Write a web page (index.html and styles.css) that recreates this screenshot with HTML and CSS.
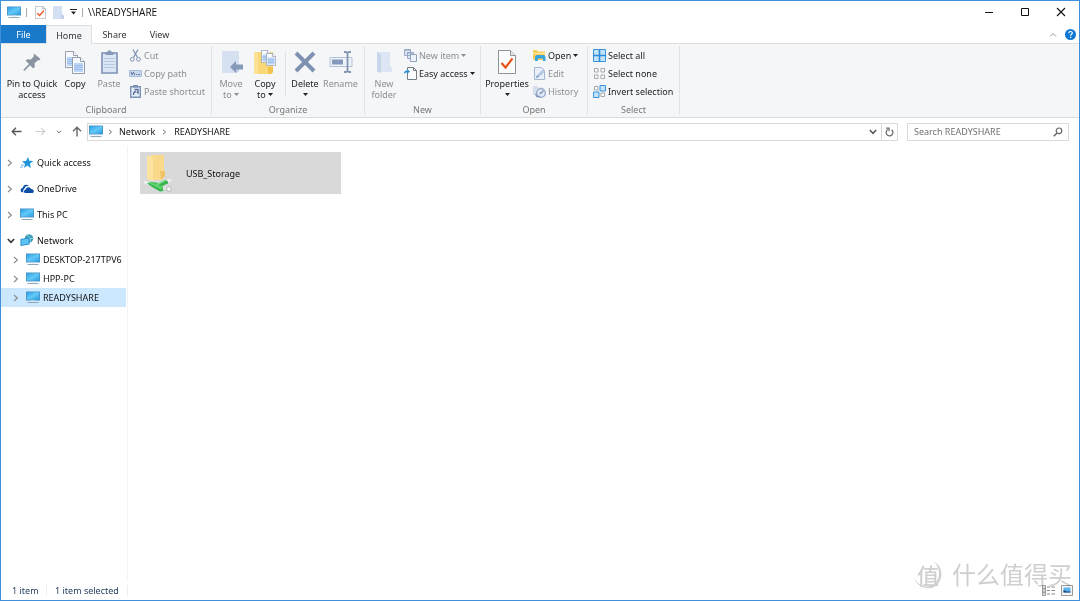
FILE: index.html
```
<!DOCTYPE html>
<html lang="en">
<head>
<meta charset="utf-8">
<title>\\READYSHARE</title>
<link rel="stylesheet" href="styles.css">
</head>
<body>
<svg class="defs" aria-hidden="true">
  <linearGradient id="screen" x1="0" y1="0" x2="1" y2="1"><stop offset="0" stop-color="#2b9fe6"/><stop offset=".5" stop-color="#62c8f8"/><stop offset="1" stop-color="#2a9ee2"/></linearGradient>
  <symbol id="pc" viewBox="0 0 14 13"><path d="M0 .5h14v9H0z" fill="#4a93c0"/><path d="M.8 1.200h12.400v7.500H.8z" fill="url(#screen)"/><path d="M5 9.500h4v1H5z" fill="#d3e2eb"/><path d="M1.500 11h11v1H1.500z" fill="#8fa9ba"/></symbol>
  <symbol id="chev" viewBox="0 0 6 8"><path d="M1 1l3.400 3L1 7" fill="none" stroke="currentColor" stroke-width="1.100"/></symbol>
  <symbol id="chevdown" viewBox="0 0 8 6"><path d="M.8 1L4 4.300 7.200 1" fill="none" stroke="currentColor" stroke-width="1.500"/></symbol>
  <symbol id="caret" viewBox="0 0 5 3"><path d="M0 0h5L2.500 3z" fill="currentColor"/></symbol>
  <symbol id="check" viewBox="0 0 18 24"><path d="M.5.5h12l5 5v18H.5z" fill="#fcfcfd" stroke="#8f9499"/><path d="M12.500.5v5h5" fill="#e8eaec" stroke="#8f9499"/><path d="M3.500 13l4 4.500 7-9" fill="none" stroke="#e8531b" stroke-width="2.200"/></symbol>
  <symbol id="page" viewBox="0 0 13 17"><path d="M.5.5h8l4 4v12H.5z" fill="#f6f9fd" stroke="#949da8"/><path d="M8.500.5v4h4" fill="#fff" stroke="#949da8"/><path d="M2 6h9v9H2z" fill="#bdd5f5"/><path d="M2 8.500h9M2 10.500h9M2 12.500h9" stroke="#8fb5ea" stroke-width=".7"/></symbol>
</svg>
<div class="window">
  <header class="titlebar">
    <svg class="t-pc" viewBox="0 0 14 13"><use href="#pc"/></svg>
    <span class="divider"></span>
    <button class="plain" aria-label="Properties"><svg width="11" height="13" viewBox="0 0 18 24" preserveAspectRatio="none"><use href="#check" width="18" height="24"/></svg></button>
    <button class="plain newf" aria-label="New folder"><svg width="11" height="13" viewBox="0 0 11 13"><path d="M0 0h9v8l2 2v3H0z" fill="#d3e0f4"/><path d="M9 8l2 2v3H7z" fill="#c1d1ea"/></svg></button>
    <button class="plain" aria-label="Customize toolbar"><svg width="7" height="6" viewBox="0 0 7 6"><path d="M0 .5h7" stroke="#222"/><path d="M1 2.500h5L3.500 5.500z" fill="#222"/></svg></button>
    <span class="divider"></span>
    <h1 class="title">\\READYSHARE</h1>
    <div class="winctl">
      <button class="plain" aria-label="Minimize"><svg width="10" height="10" viewBox="0 0 10 10"><path d="M1 5.500h8" stroke="#111"/></svg></button>
      <button class="plain" aria-label="Maximize"><svg width="10" height="10" viewBox="0 0 10 10"><path d="M1.500 1.500h7v7h-7z" fill="none" stroke="#111"/></svg></button>
      <button class="plain" aria-label="Close"><svg width="10" height="10" viewBox="0 0 10 10"><path d="M1 1l8 8M9 1L1 9" stroke="#111" stroke-width="1.100"/></svg></button>
    </div>
  </header>

  <nav class="tabs">
    <button class="tab file">File</button>
    <button class="tab active">Home</button>
    <button class="tab">Share</button>
    <button class="tab">View</button>
    <div class="tabs-end">
      <button class="plain" aria-label="Collapse ribbon"><svg width="8" height="5" viewBox="0 0 8 5"><path d="M1 4.500l3-3 3 3" fill="none" stroke="#999"/></svg></button>
      <button class="help" aria-label="Help"><svg width="11" height="11" viewBox="0 0 11 11"><circle cx="5.500" cy="5.500" r="5.500" fill="#0f78d4"/><path d="M3.800 4.200c0-2.300 3.500-2.200 3.500-.2 0 1.300-1.700 1.300-1.700 2.700" fill="none" stroke="#fff" stroke-width="1.200"/><path d="M5 7.700h1.300V9H5z" fill="#fff"/></svg></button>
    </div>
  </nav>

  <div class="ribbon">
    <section class="group clipboard">
      <div class="tools">
        <button class="big wide"><span class="ico"><svg width="18" height="18" viewBox="0 0 18 18"><path d="M11 .5L17.500 6l-1.500 1.500-1-.3-3.500 3 .3 3.800-1.500 1.500-3.300-3.300L2 17.500l-1.500.3.300-1.500L6 11 2.700 7.700 4.200 6.200l3.800.3 3-3.500-.3-1.200z" fill="#8a949f"/></svg></span><span>Pin to Quick<br>access</span></button>
        <button class="big"><span class="ico"><svg width="20" height="23" viewBox="0 0 20 23"><svg width="13" height="17"><use href="#page"/></svg><svg x="7" y="6" width="13" height="17"><use href="#page"/></svg></svg></span><span>Copy</span></button>
        <button class="big" disabled><span class="ico"><svg width="17" height="24" viewBox="0 0 17 24"><path d="M1 3h15v20H1z" fill="#dbe6f5" stroke="#7d92b4" stroke-width="1.600"/><path d="M4.500 2h2L7 .5h3L10.500 2h2v3h-8z" fill="#8598b6"/><path d="M3 8.500h11M3 11.500h11M3 14.500h11M3 17.500h11" stroke="#b5c8e2"/></svg></span><span>Paste</span></button>
        <div class="small-col">
          <button class="small" disabled><svg viewBox="0 0 13 13"><path d="M4 .5l4.500 8M9 .5l-4.500 8" fill="none" stroke="#8294b2" stroke-width="1.300"/><circle cx="3.300" cy="10.300" r="1.900" fill="none" stroke="#8294b2"/><circle cx="9.500" cy="10.300" r="1.900" fill="none" stroke="#8294b2"/></svg>Cut</button>
          <button class="small" disabled><svg viewBox="0 0 13 13"><path d="M.5 3.500h12v6H.5z" fill="#c9d7ec" stroke="#a9bddb"/><path d="M2 5l1.200 3L4.500 5l1.200 3M7 7.500h1M9 7.500h2" fill="none" stroke="#5c7192" stroke-width=".9"/></svg>Copy path</button>
          <button class="small" disabled><svg viewBox="0 0 13 13"><path d="M1.700 1.700h9.600v10.600H1.700z" fill="#e4ecf8" stroke="#7d92b4" stroke-width="1.400"/><path d="M4 0h5v2.500H4z" fill="#7d92b4"/><path d="M4.500 10C4.500 7 5.500 6.500 7 6.500M5.500 4.500H9V8L7.800 6.800" fill="none" stroke="#576f96" stroke-width="1.300"/></svg>Paste shortcut</button>
        </div>
      </div>
      <h2>Clipboard</h2>
    </section>

    <section class="group organize">
      <div class="tools">
        <button class="big" disabled><span class="ico"><svg width="23" height="24" viewBox="0 0 23 24"><path d="M2 1h17v20l-3 2H2z" fill="#d5e0f1"/><path d="M16 17h3v4l-3 2z" fill="#bfcee6"/><path d="M10 17l6-6v3.500h7v5h-7V23z" fill="#8599b9"/></svg></span><span>Move<br>to <svg class="caret"><use href="#caret"/></svg></span></button>
        <button class="big"><span class="ico"><svg width="22" height="25" viewBox="0 0 22 25"><path d="M0 2h19v20l-2 2H0z" fill="#f9d977"/><path d="M0 2h4v22H0z" fill="#fbe294"/><path d="M14 17h5v5l-2 2h-3z" fill="#f1c24e"/><svg x="7" y="0" width="10" height="13" viewBox="0 0 13 17"><use href="#page" width="13" height="17"/></svg><svg x="12" y="3" width="10" height="13" viewBox="0 0 13 17"><use href="#page" width="13" height="17"/></svg></svg></span><span>Copy<br>to <svg class="caret"><use href="#caret"/></svg></span></button>
        <span class="rule"></span>
        <button class="big"><span class="ico"><svg width="22" height="22" viewBox="0 0 22 22"><path d="M2 2l18 18M20 2L2 20" stroke="#7f91b1" stroke-width="4"/></svg></span><span>Delete<br><svg class="caret"><use href="#caret"/></svg></span></button>
        <button class="big ren" disabled><span class="ico"><svg width="24" height="22" viewBox="0 0 24 22"><path d="M1 6.500h22v9H1z" fill="#eef3fa" stroke="#b3c2da"/><path d="M3 8.500h11v5H3z" fill="#8398ba"/><path d="M15 1h2l1.500 1L20 1h2M18.500 2v18M15 21h2l1.500-1 1.500 1h2" fill="none" stroke="#8294b2" stroke-width="1.800"/></svg></span><span>Rename</span></button>
      </div>
      <h2>Organize</h2>
    </section>

    <section class="group new">
      <div class="tools">
        <button class="big" disabled><span class="ico"><svg width="16" height="24" viewBox="0 0 16 24"><path d="M1 2h13v14l2 1.500V22H1z" fill="#dce6f4"/><path d="M1 2l4 2.500V23l-4-1.500z" fill="#c8d6eb"/></svg></span><span>New<br>folder</span></button>
        <div class="small-col">
          <button class="small" disabled><svg viewBox="0 0 13 13"><path d="M.5.5h6v6h-6zM3.500 3.500h6v6h-6z" fill="#dbe6f5" stroke="#9aabc8"/><path d="M6.500 5.500h6v7h-6z" fill="#eef3fa" stroke="#8fa3c3"/><path d="M.5 1h6M3.500 4h6" stroke="#8fa3c3"/></svg>New item <svg class="caret"><use href="#caret"/></svg></button>
          <button class="small"><svg viewBox="0 0 13 13"><path d="M3.500.5h6l3 3v9h-9z" fill="#fafbfc" stroke="#777e86"/><path d="M9.500.5v3h3" fill="none" stroke="#777e86"/><path d="M0 7c0-3 1-3.500 3-3.500V2l3 2.500-3 2.500V5.500C1.500 5.500 1 6 0 7z" fill="#2c8fd0"/></svg>Easy access <svg class="caret"><use href="#caret"/></svg></button>
        </div>
      </div>
      <h2>New</h2>
    </section>

    <section class="group open">
      <div class="tools">
        <button class="big props"><span class="ico"><svg width="18" height="24"><use href="#check"/></svg></span><span>Properties<br><svg class="caret"><use href="#caret"/></svg></span></button>
        <div class="small-col">
          <button class="small"><svg viewBox="0 0 13 13"><path d="M0 1h4l1 1.500h7V11H0z" fill="#f8cf5d"/><path d="M0 4h12v1H0z" fill="#fde8a4"/><path d="M2 12V8.500C2 7 3 6 4.500 6H10c1.500 0 2.500 1 2.500 2.500V12H10V9.500H4.800V12z" fill="#35a6e0"/></svg>Open <svg class="caret"><use href="#caret"/></svg></button>
          <button class="small" disabled><svg viewBox="0 0 13 13"><path d="M1.500.5h7l3 3v9h-10z" fill="#e9f0f9" stroke="#a2b5d2"/><path d="M3 11l1-3L10 2.500l2 2L6 10z" fill="#b3c7e4"/><path d="M3 11l1-2.500L5.500 10z" fill="#7389ab"/></svg>Edit</button>
          <button class="small" disabled><svg viewBox="0 0 13 13"><path d="M0 1h4l1 1.500h5V10H0z" fill="#d4dfef"/><circle cx="8" cy="8" r="4.300" fill="#dfe8f5" stroke="#91a5c5" stroke-width="1.200"/><path d="M10.500 5.500L8 8.300 6.500 8M2.500 9l1.500 2.500h3" fill="none" stroke="#7e94b7" stroke-width="1.300"/></svg>History</button>
        </div>
      </div>
      <h2>Open</h2>
    </section>

    <section class="group select">
      <div class="tools">
        <div class="small-col">
          <button class="small"><svg viewBox="0 0 13 13"><path d="M.5.500h12v12H.5z" fill="#c3e3fa" stroke="#3a93dc"/><path d="M6.500 0v13M0 6.500h13" stroke="#2f8ad8" stroke-width="1.600"/></svg>Select all</button>
          <button class="small"><svg viewBox="0 0 13 13"><path d="M1.500 1.500h3.500v3.500h-3.500zM8 1.500h3.500v3.500H8zM1.500 8h3.500v3.500h-3.500zM8 8h3.500v3.500H8z" fill="#fff" stroke="#a2a6aa"/></svg>Select none</button>
          <button class="small"><svg viewBox="0 0 13 13"><path d="M1.500 1.500h3.500v3.500h-3.500zM8 8h3.500v3.500H8z" fill="#fff" stroke="#a2a6aa"/><path d="M7 .5h5.500V6H7zM.5 7H6v5.500H.5z" fill="#c3e3fa" stroke="#3a93dc"/></svg>Invert selection</button>
        </div>
      </div>
      <h2>Select</h2>
    </section>
  </div>

  <div class="addressbar">
    <button class="plain" aria-label="Back"><svg width="11" height="9" viewBox="0 0 11 9"><path d="M5 .8L1.200 4.500 5 8.200M1.200 4.500h9.300" fill="none" stroke="#555" stroke-width="1.300"/></svg></button>
    <button class="plain fwd" aria-label="Forward"><svg width="11" height="9" viewBox="0 0 11 9"><path d="M6 .8l3.800 3.700L6 8.200M9.800 4.500H.5" fill="none" stroke="#ccc" stroke-width="1.100"/></svg></button>
    <button class="plain recent" aria-label="Recent locations"><svg width="6" height="4" viewBox="0 0 8 6"><use href="#chevdown" width="8" height="6"/></svg></button>
    <button class="plain up" aria-label="Up"><svg width="10" height="11" viewBox="0 0 10 11"><path d="M1 5.200L5 1.200l4 4M5 1.200v9.300" fill="none" stroke="#666" stroke-width="1.400"/></svg></button>
    <div class="path">
      <svg width="14" height="13"><use href="#pc"/></svg>
      <svg class="sep" width="5" height="6"><use href="#chev"/></svg>
      <a href="#">Network</a>
      <svg class="sep" width="5" height="6"><use href="#chev"/></svg>
      <a href="#">READYSHARE</a>
      <button class="plain drop" aria-label="Previous locations"><svg width="8" height="6"><use href="#chevdown"/></svg></button>
      <button class="plain refresh" aria-label="Refresh"><svg width="9" height="10" viewBox="0 0 9 10"><path d="M2.800 2.500a3.400 3.400 0 1 0 3.800.2M1.200 1.200H4V4.200" fill="none" stroke="#666" stroke-width="1.200"/></svg></button>
    </div>
    <label class="search"><input type="text" placeholder="Search READYSHARE" aria-label="Search READYSHARE"><svg width="10" height="10" viewBox="0 0 10 10"><circle cx="6" cy="3.800" r="2.800" fill="none" stroke="#666" stroke-width="1.200"/><path d="M4 6L.8 9.200" stroke="#666" stroke-width="1.500"/></svg></label>
  </div>

  <div class="body">
    <nav class="tree">
      <a href="#" class="node"><svg class="tw"><use href="#chev"/></svg><svg class="ti" viewBox="0 0 14 13"><path d="M8 1l1.300 3.700 4 .3-3.300 2.500.8 4.500L7.300 9.500 4 12l1-4-3-2.700 4-.3z" fill="#2094dc"/><path d="M1 9h3M0 11h3" stroke="#66b7e8"/></svg>Quick access</a>
      <a href="#" class="node"><svg class="tw"><use href="#chev"/></svg><svg class="ti" viewBox="0 0 14 13"><path d="M1 9.500C0 8 1 6 2.700 6 3 3 6.500 1.500 9 4c-3-.5-4.500 1-4.700 3C3 7.500 3 9 3.500 10.300 2.500 10.500 1.500 10.300 1 9.500z" fill="#0b4fa8"/><path d="M5.500 11C3.500 10.800 3.500 8 5.500 7.700 5.800 4.800 10 4.300 11 7c2.500-.3 4 3 1.500 4z" fill="#0b4fa8"/></svg>OneDrive</a>
      <a href="#" class="node"><svg class="tw"><use href="#chev"/></svg><svg class="ti"><use href="#pc"/></svg>This PC</a>
      <a href="#" class="node"><svg class="tw open"><use href="#chevdown"/></svg><svg class="ti" viewBox="0 0 14 13"><circle cx="9" cy="4.500" r="4.200" fill="#3c9fb8"/><path d="M7 1c3 2 4 4 3 7M5 4.500h8" fill="none" stroke="#a0dce5" stroke-width=".8"/><path d="M.5 5l9-1.500v7L.5 12z" fill="#2188cc"/><path d="M1.300 5.700L8.700 4.500v5.300l-7.400 1.300z" fill="#5dc1f3"/></svg>Network</a>
      <a href="#" class="node child"><svg class="tw"><use href="#chev"/></svg><svg class="ti"><use href="#pc"/></svg>DESKTOP-217TPV6</a>
      <a href="#" class="node child"><svg class="tw"><use href="#chev"/></svg><svg class="ti"><use href="#pc"/></svg>HPP-PC</a>
      <a href="#" class="node child selected"><svg class="tw"><use href="#chev"/></svg><svg class="ti"><use href="#pc"/></svg>READYSHARE</a>
    </nav>
    <main class="files">
      <button class="item">
        <svg width="30" height="39" viewBox="0 0 30 39"><path d="M8 1h13v22l-2 3H8z" fill="#fad98a"/><path d="M17 17h5v5l-4 4z" fill="#efc566"/><path d="M4 1l6 3v23l-6-2z" fill="#fde3a0"/><path d="M1 28l6 2M20 29l8-3" stroke="#eef0f0" stroke-width="2.500"/><path d="M4 29.500l4-1.500 8 1 6-3 3 1.500v2l-7 3 5 1v3l-6 1-7-4z" fill="#35b54c"/><path d="M5 29l3-1 13 5-3 2.500z" fill="#5bd06c"/><path d="M14 30.500l8-4" stroke="#83e08f" stroke-width="1.500"/><path d="M20 34.500l6 .5" stroke="#dfe3e3" stroke-width="4"/><circle cx="26" cy="35" r="2.400" fill="#f5f6f6" stroke="#b5b9b9"/></svg>
        <span>USB_Storage</span>
      </button>
    </main>
  </div>

  <footer class="status">
    <span class="count">1 item</span>
    <span class="picked">1 item selected</span>
    <div class="views">
      <button class="plain" aria-label="Details"><svg width="13" height="11" viewBox="0 0 13 11"><path d="M.5.5h3v10h-3z" fill="#ddd" stroke="#999"/><path d="M.5 3.800h3M.5 7.200h3M5 2h3M9.500 2H13M5 5.500h3M9.500 5.500H13M5 9h3M9.500 9H13" stroke="#888"/></svg></button>
      <button class="plain" aria-label="Large icons"><svg width="12" height="11" viewBox="0 0 12 11"><path d="M.5.5h11v10H.5z" fill="#f6f6f6" stroke="#9a9a9a"/><path d="M2.500 2.500h7v5h-7z" fill="#5bb0ee"/><path d="M2.500 5l3 1.500h4v1h-7z" fill="#17406f"/></svg></button>
    </div>
  </footer>

  <div class="watermark" aria-hidden="true">
    <span class="seal"><svg viewBox="0 0 30 30"><path d="M1 18c2 9 11 13 19 10.500C30 24 32 9 21 2.500c8 8 6 20-2 24C12 29.500 4 26 1 18z" fill="#cfcfcf"/></svg><b>值</b></span>
    <span>什么值得买</span>
  </div>
</div>
</body>
</html>
```
FILE: styles.css
```
* { box-sizing: border-box; }
body {
  margin: 0;
  font: 9px/11px "Noto Sans", "Open Sans", "Noto Sans CJK SC", sans-serif;
  color: #111;
  background: #fff;
}
button, input { font: inherit; color: inherit; }
button { border: 0; background: none; padding: 0; }
a { color: inherit; text-decoration: none; }
svg { display: block; flex: none; }
.defs { position: absolute; width: 0; height: 0; }
h1, h2 { margin: 0; font: inherit; }
.plain { display: flex; align-items: center; justify-content: center; }

.window {
  position: relative;
  display: flex;
  flex-direction: column;
  min-height: 100vh;
  border: 1px solid #3f8fdb;
}

.titlebar { display: flex; align-items: center; height: 24px; padding: 0 0 2px 6px; }
.t-pc { width: 14px; height: 13px; }
.divider { width: 1px; height: 9px; margin: 0 8px 0 5px; background: #aaa; }
.newf { margin: 0 6px 0 7px; }
.title { font-family: "Open Sans", sans-serif; font-size: 10px; }
.titlebar .divider + .title { margin-left: -3px; }
.winctl { display: flex; margin-left: auto; }
.winctl .plain { width: 36px; height: 22px; }

.tabs { display: flex; height: 19px; border-bottom: 1px solid #dcdee0; }
.tab { width: 45px; height: 18px; color: #333; }
.tab.file { background: #1979ca; color: #fff; }
.tab.active { width: 46px; height: 19px; border: 1px solid #dcdee0; border-bottom: 0; background: #f4f6f8; }
.tabs-end { display: flex; align-items: center; gap: 8px; margin-left: auto; padding-right: 3px; }
.help { display: block; }

.ribbon { display: flex; height: 74px; background: #f4f6f8; border-bottom: 1px solid #d9dbdd; }
.group {
  display: flex;
  flex-direction: column;
  margin: 2px 0;
  border-right: 1px solid #e0e2e5;
  color: #222;
}
.group h2 { text-align: center; color: #777; margin-top: auto; }
.tools { display: flex; }
.clipboard { width: 211px; }
.clipboard .tools { padding-left: 5px; }
.organize { width: 153px; }
.new { width: 116px; }
.organize .tools, .new .tools { padding-left: 2px; }
.open { width: 107px; }
.open .tools { padding-left: 3px; }
.select { width: 92px; }
.select .tools { padding-left: 5px; }
.big { display: flex; flex-direction: column; align-items: center; width: 34px; white-space: nowrap; }
.big.wide { width: 52px; }
.big.ren { width: 37px; }
.big.props { width: 46px; }
.ico { display: flex; align-items: center; height: 32px; }
.big:disabled, .small:disabled { color: #8b8f94; }
.caret { display: inline-block; width: 5px; height: 3px; vertical-align: 2px; }
.rule { width: 1px; height: 46px; margin: 5px 2px 0 3px; background: #e0e2e5; }
.small-col { display: flex; flex-direction: column; margin-left: 3px; }
.select .small-col { margin-left: 0; }
.small { display: flex; align-items: center; gap: 2px; height: 18px; white-space: nowrap; }
.small > svg:first-child { width: 13px; height: 13px; }

.addressbar { display: flex; align-items: center; height: 28px; padding: 0 10px 1px; color: #666; }
.fwd { margin-left: 13px; }
.recent { margin-left: 10px; }
.up { margin: 0 5px 0 10px; }
.path {
  display: flex;
  align-items: center;
  flex: 1;
  height: 18px;
  padding-left: 1px;
  border: 1px solid #d9d9d9;
  color: #111;
}
.sep { margin: 0 6px 0 5px; color: #555; }
a + .sep { margin: 0 7px; }
.drop { width: 16px; margin-left: auto; color: #555; }
.refresh { align-self: stretch; width: 16px; border-left: 1px solid #d9d9d9; }
.search {
  display: flex;
  align-items: center;
  width: 162px;
  height: 18px;
  margin-left: 9px;
  padding: 0 5px 0 6px;
  border: 1px solid #d9d9d9;
}
.search input { flex: 1; min-width: 0; padding: 0; border: 0; outline: 0; background: none; }
.search input::placeholder { color: #707070; opacity: 1; }

.body { display: flex; flex: 1; }
.tree { width: 127px; padding: 7px 1px 0 0; border-right: 1px solid #f3f3f3; }
.node { display: flex; align-items: center; height: 19px; margin-bottom: 7px; padding-left: 6px; white-space: nowrap; }
.node:nth-child(4), .child { margin-bottom: 0; }
.child { padding-left: 12px; }
.selected { background: #cce8ff; }
.tw { width: 6px; height: 8px; margin-right: 7px; color: #8a8a8a; }
.tw.open { width: 8px; height: 6px; margin-right: 5px; color: #333; }
.ti { width: 14px; height: 13px; margin-right: 3px; }
.files { flex: 1; padding: 6px 12px; }
.item { display: flex; align-items: center; gap: 13px; width: 201px; height: 42px; padding-left: 3px; background: #d9d9d9; }

.status { display: flex; align-items: center; height: 19px; padding: 0 6px 0 11px; color: #1e395b; }
.count { width: 35px; border-right: 1px solid #eee; }
.picked { width: 81px; padding-left: 8px; border-right: 1px solid #eee; white-space: nowrap; }
.views { display: flex; gap: 6px; margin-left: auto; }

.watermark {
  position: absolute;
  right: 7px;
  bottom: 9px;
  display: flex;
  align-items: center;
  gap: 9px;
  font: 24px/34px "Noto Sans CJK SC", sans-serif;
  color: #cfcfcf;
  mix-blend-mode: multiply;
  pointer-events: none;
}
.seal { display: grid; place-items: center; width: 30px; height: 30px; }
.seal > * { grid-area: 1 / 1; }
.seal svg { width: 30px; height: 30px; }
.seal b { font-size: 22px; line-height: 30px; font-weight: 500; }
```
